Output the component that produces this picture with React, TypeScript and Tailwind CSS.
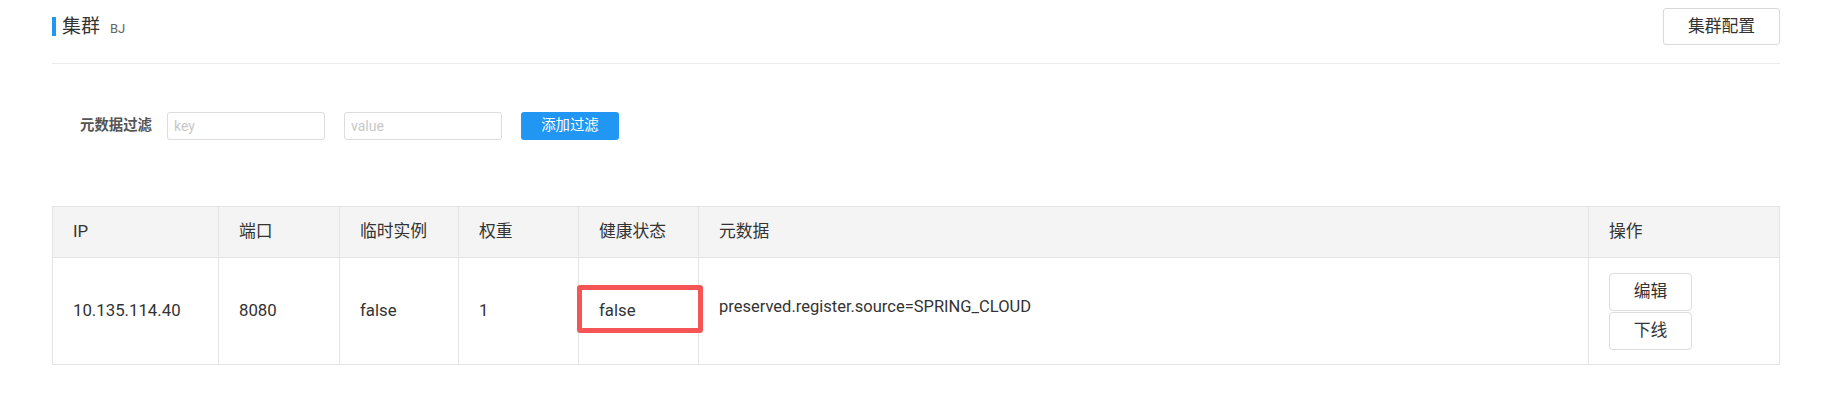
import React from 'react';

const FONT = { fontFamily: 'Roboto, "Noto Sans CJK SC", sans-serif' };

// column widths measured from the reference table
const cols = [166, 121, 119, 120, 120, 890, 191];
const heads = ['IP', '端口', '临时实例', '权重', '健康状态', '元数据', '操作'];

export default function App() {
    return (
        <div className="min-h-[405px] w-full bg-white pl-[52px] pr-[59px] text-[#333]" style={FONT}>
            {/* Title bar */}
            <div className="flex h-[64px] items-start justify-between border-b border-[#eaeaea] pt-[8px]">
                <div className="flex h-[37px] items-center">
                    <span className="mr-[6px] h-[19px] w-[4px] bg-[#2196f3]" />
                    <span className="text-[19px] leading-none text-[#333]">集群</span>
                    <span className="ml-[10px] mt-[3px] text-[13px] leading-none text-[#666]">BJ</span>
                </div>
                <button className="h-[37px] w-[117px] rounded-[3px] border border-[#d9d9d9] bg-white text-[16.8px] text-[#333]">
                    集群配置
                </button>
            </div>

            {/* Metadata filter */}
            <div className="mt-[48px] flex h-[28px] items-center pl-[28px]">
                <span className="mr-[15px] text-[14.4px] font-semibold text-[#555]">元数据过滤</span>
                <input
                    placeholder="key"
                    className="h-[28px] w-[158px] rounded-[3px] border border-[#dcdcdc] px-[6px] text-[14px] outline-none placeholder:text-[#c8c8c8]"
                />
                <input
                    placeholder="value"
                    className="ml-[19px] h-[28px] w-[158px] rounded-[3px] border border-[#dcdcdc] px-[6px] text-[14px] outline-none placeholder:text-[#c8c8c8]"
                />
                <button className="ml-[19px] h-[28px] w-[98px] rounded-[3px] bg-[#2196f3] text-[14.4px] text-white">
                    添加过滤
                </button>
            </div>

            {/* Instance table */}
            <table className="mt-[66px] w-full table-fixed border-collapse text-[16.8px]">
                <colgroup>
                    {cols.map((w, i) => (
                        <col key={i} style={{ width: w }} />
                    ))}
                </colgroup>
                <thead>
                    <tr className="h-[51px] bg-[#f4f4f4]">
                        {heads.map((h) => (
                            <th key={h} className="border border-[#e4e4e4] px-[20px] text-left font-normal text-[#333]">
                                {h}
                            </th>
                        ))}
                    </tr>
                </thead>
                <tbody>
                    <tr className="h-[107px]">
                        <td className="border border-[#e4e4e4] px-[20px]">10.135.114.40</td>
                        <td className="border border-[#e4e4e4] px-[20px]">8080</td>
                        <td className="border border-[#e4e4e4] px-[20px]">false</td>
                        <td className="border border-[#e4e4e4] px-[20px]">1</td>
                        <td className="relative border border-[#e4e4e4] px-[20px]">
                            false
                            {/* highlight annotation */}
                            <div className="absolute left-[-2px] top-[27px] h-[48px] w-[126px] rounded-[3px] border-[5px] border-[#f55555]" />
                        </td>
                        <td className="border border-[#e4e4e4] px-[20px] pb-[8px] text-[16.5px]">preserved.register.source=SPRING_CLOUD</td>
                        <td className="border border-[#e4e4e4] px-[20px]">
                            <div className="flex flex-col gap-[1px]">
                                <button className="h-[38px] w-[83px] rounded-[4px] border border-[#dcdcdc] bg-white text-[16.8px]">编辑</button>
                                <button className="h-[38px] w-[83px] rounded-[4px] border border-[#dcdcdc] bg-white text-[16.8px]">下线</button>
                            </div>
                        </td>
                    </tr>
                </tbody>
            </table>
        </div>
    );
}
